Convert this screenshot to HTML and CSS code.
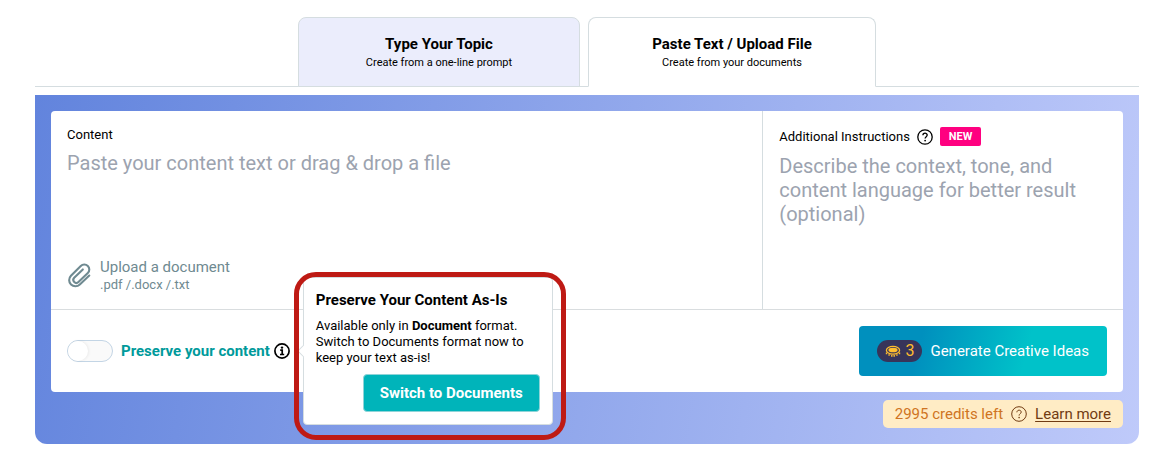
FILE: index.html
```html
<!DOCTYPE html>
<html lang="en">
<head>
<meta charset="utf-8">
<meta name="viewport" content="width=device-width, initial-scale=1">
<title>Create</title>
<link rel="stylesheet" href="styles.css">
</head>
<body>
<main class="page">
  <div class="tabs" role="tablist">
    <button class="tab tab-idle" type="button" role="tab" aria-selected="false">
      <span class="tab-title">Type Your Topic</span>
      <span class="tab-sub">Create from a one-line prompt</span>
    </button>
    <button class="tab tab-active" type="button" role="tab" aria-selected="true">
      <span class="tab-title">Paste Text / Upload File</span>
      <span class="tab-sub">Create from your documents</span>
    </button>
  </div>

  <form class="panel">
    <div class="card">
      <div class="fields">
        <section class="field">
          <label class="label" for="content">Content</label>
          <textarea class="area" id="content" rows="3" placeholder="Paste your content text or drag &amp; drop a file"></textarea>
          <button class="upload" type="button">
            <svg class="clip" viewBox="0 0 24 24" aria-hidden="true"><path d="M21.4 12 12.3 20.6A5.6 5.6 0 0 1 3.8 12.2L13.2 2.8A4.7 4.7 0 0 1 20 9.6L11 18.3A2.9 2.9 0 0 1 6.9 14.2L15.2 6.2"/></svg>
            <span class="upload-text">
              <span class="upload-title">Upload a document</span>
              <span class="upload-types">.pdf /.docx /.txt</span>
            </span>
          </button>
        </section>
        <section class="field field-extra">
          <div class="label-row">
            <label class="label" for="extra">Additional Instructions</label>
            <svg class="icon" viewBox="0 0 16 16" aria-hidden="true"><circle cx="8" cy="8" r="7.2"/><path d="M5.9 6.3C5.9 3.5 10.2 3.5 10.2 6.1 10.2 7.7 8.1 7.7 8.1 9.6"/><circle class="dot" cx="8.1" cy="11.6" r=".9"/></svg>
            <span class="badge">NEW</span>
          </div>
          <textarea class="area" id="extra" rows="3" placeholder="Describe the context, tone, and content language for better result (optional)"></textarea>
        </section>
      </div>

      <div class="actions">
        <div class="preserve">
          <input class="toggle" type="checkbox" id="preserve">
          <div class="preserve-name">
            <label class="preserve-label" for="preserve">Preserve your content</label>
            <div class="info">
              <svg class="icon" viewBox="0 0 16 16" aria-hidden="true"><circle class="ring" cx="8" cy="8" r="7.1"/><path class="ring" d="M6.2 7.2H8.2V11.4M6 11.5H10.2"/><circle class="dot" cx="8" cy="4.6" r="1.2"/></svg>
              <div class="popover">
                <h2 class="pop-title">Preserve Your Content As-Is</h2>
                <p class="pop-text">Available only in <strong>Document</strong> format. Switch to Documents format now to keep your text as-is!</p>
                <button class="switch" type="button">Switch to Documents</button>
              </div>
            </div>
          </div>
        </div>
        <button class="generate" type="button">
          <span class="cost">
            <svg class="coin" viewBox="0 0 16 13" aria-hidden="true"><ellipse class="rim" cx="8" cy="5.2" rx="6.6" ry="3.9"/><ellipse class="face" cx="8" cy="5" rx="4.6" ry="2.3"/><path class="edge" d="M1.5 7.6V9.2M4.1 9.2V10.8M6.8 10V11.8M9.2 10V11.8M11.9 9.2V10.8M14.5 7.6V9.2"/></svg>
            3
          </span>
          Generate Creative Ideas
        </button>
      </div>
    </div>

    <div class="credits">
      <span>2995 credits left</span>
      <svg class="icon credits-icon" viewBox="0 0 16 16" aria-hidden="true"><circle cx="8" cy="8" r="7.3"/><path d="M5.9 6.3C5.9 3.5 10.2 3.5 10.2 6.1 10.2 7.7 8.1 7.7 8.1 9.6"/><circle class="dot" cx="8.1" cy="11.6" r=".8"/></svg>
      <a class="more" href="#">Learn more</a>
    </div>
  </form>
</main>
</body>
</html>
```

FILE: styles.css
```css
* { box-sizing: border-box; }

body {
  margin: 0;
  background: #fff;
  color: #000;
  font-family: "HK Grotesk", Roboto, sans-serif;
  font-size: 16px;
}

button, textarea { font: inherit; color: inherit; }
button { border: 0; cursor: pointer; }

.page { padding: 17px 18px 16px 35px; }

.tabs {
  display: flex;
  justify-content: center;
  gap: 8px;
  margin-bottom: 8px;
  box-shadow: inset 0 -1px #d5dde0;
}

.tab {
  display: flex;
  flex-direction: column;
  align-items: center;
  padding: 16px 16px 14px;
  border: 1px solid #d5dde0;
  border-radius: 8px 8px 0 0;
  flex: 0 1 288px;
}
.tab-idle { background: #ebedfc; flex-basis: 282px; }
.tab-active { background: #fff; border-bottom-color: #fff; }
.tab-title { font-size: 15px; line-height: 20px; font-weight: 700; white-space: nowrap; }
.tab-sub { font-size: 11px; line-height: 18px; white-space: nowrap; }

.panel {
  display: flex;
  flex-direction: column;
  gap: 8px;
  padding: 16px;
  border-radius: 0 0 12px 12px;
  background: linear-gradient(100deg, #6284dd, #bfcafa);
}

.card { background: #fff; border-radius: 4px; }

.fields {
  display: grid;
  grid-template-columns: 71fr 36fr;
  border-bottom: 1px solid #d9dddf;
}
.field {
  display: flex;
  flex-direction: column;
  align-items: stretch;
  gap: 8px;
  padding: 16px;
}
.field-extra { border-left: 1px solid #d5dde0; }
.label { font-size: 13px; line-height: 16px; }
.label-row { display: flex; align-items: center; gap: 7px; }

.area {
  display: block;
  flex: 1;
  width: 100%;
  min-height: 98px;
  padding: 0;
  border: 0;
  outline: 0;
  resize: none;
  background: none;
  font-size: 20px;
  line-height: 24px;
}
.area::placeholder { color: #9ca3af; opacity: 1; }

.icon {
  width: 16px;
  height: 16px;
  flex: none;
  fill: none;
  stroke: currentColor;
  stroke-width: 1.3;
}
.icon .dot { fill: currentColor; stroke: none; }
.icon .ring { stroke-width: 1.7; }

.badge {
  padding: 0 9px;
  border-radius: 2px;
  background: #ff0080;
  color: #fff;
  font-size: 11px;
  line-height: 19px;
  font-weight: 700;
}

.upload {
  display: flex;
  align-items: center;
  align-self: flex-start;
  gap: 8px;
  padding: 0;
  background: none;
  color: #6f8a91;
  text-align: left;
}
.clip {
  width: 25px;
  height: 25px;
  fill: none;
  stroke: currentColor;
  stroke-width: 2;
  stroke-linecap: round;
  stroke-linejoin: round;
}
.upload-text { display: flex; flex-direction: column; }
.upload-title { font-size: 15px; line-height: 20px; }
.upload-types { font-size: 13px; line-height: 16px; }

.actions {
  display: flex;
  align-items: center;
  justify-content: space-between;
  padding: 16px;
}
.preserve { display: flex; align-items: center; gap: 8px; }
.preserve-name { display: flex; align-items: center; gap: 4px; }
.toggle {
  appearance: none;
  width: 46px;
  height: 22px;
  margin: 0;
  border: 1px solid #c3d5e5;
  border-radius: 11px;
  background: #fafafa;
}
.toggle::before {
  content: "";
  display: block;
  width: 20px;
  height: 20px;
  border-radius: 50%;
  background: #fff;
  box-shadow: 1px 0 3px #0001;
}
.toggle:checked { background: #00b4ba; }
.toggle:checked::before { margin-left: auto; }
.preserve-label { color: #009a9b; font-size: 15px; line-height: 20px; font-weight: 700; }
.info { position: relative; display: flex; }

.popover {
  position: absolute;
  left: 29px;
  top: 50%;
  transform: translateY(-50%);
  width: 250px;
  padding: 12px;
  border: 1px solid #d5dde0;
  border-radius: 4px;
  background: #fff;
}
.popover::before {
  content: "";
  position: absolute;
  left: -5px;
  top: 50%;
  width: 8px;
  height: 8px;
  border: solid #d5dde0;
  border-width: 0 0 1px 1px;
  background: #fff;
  transform: translateY(-50%) rotate(45deg);
}
/* highlight ring round the popover */
.popover::after {
  content: "";
  position: absolute;
  inset: -6px -14px -16px -10px;
  border: 5px solid #be1a14;
  border-radius: 22px;
  pointer-events: none;
}
.pop-title { margin: 0 0 8px; font-size: 15px; line-height: 20px; font-weight: 700; }
.pop-text { margin: 0 0 8px; font-size: 13px; line-height: 16px; }
.switch {
  display: block;
  margin-left: auto;
  padding: 8px 16px;
  border: 1px solid #8fd4d8;
  border-radius: 4px;
  background: #00b4ba;
  color: #fff;
  font-size: 15px;
  line-height: 20px;
  font-weight: 700;
}

.generate {
  display: flex;
  align-items: center;
  gap: 8px;
  padding: 14px 18px;
  border-radius: 4px;
  background: linear-gradient(105deg, #0090be 25%, #00c2c9 67%);
  color: #fff;
  font-size: 15px;
}
.cost {
  display: flex;
  align-items: center;
  gap: 4px;
  padding: 0 8px;
  border-radius: 11px;
  background: #37345a;
  color: #ffbd2e;
  font-size: 16px;
  line-height: 22px;
}
.coin { width: 16px; height: 13px; }
.coin .face { fill: #ffbd2e; }
.coin .rim { fill: none; stroke: #ffbd2e; stroke-width: 1.3; }
.coin .edge { stroke: #ffbd2e; stroke-width: 1.4; }

.credits {
  display: flex;
  align-items: center;
  align-self: flex-end;
  gap: 8px;
  padding: 4px 12px;
  border-radius: 5px;
  background: #ffecc5;
  color: #cf7422;
  font-size: 15px;
  line-height: 20px;
}
.credits-icon, .more { color: #713b12; }
.credits-icon { stroke-width: 1; }
.more { text-underline-offset: 2px; }
```
